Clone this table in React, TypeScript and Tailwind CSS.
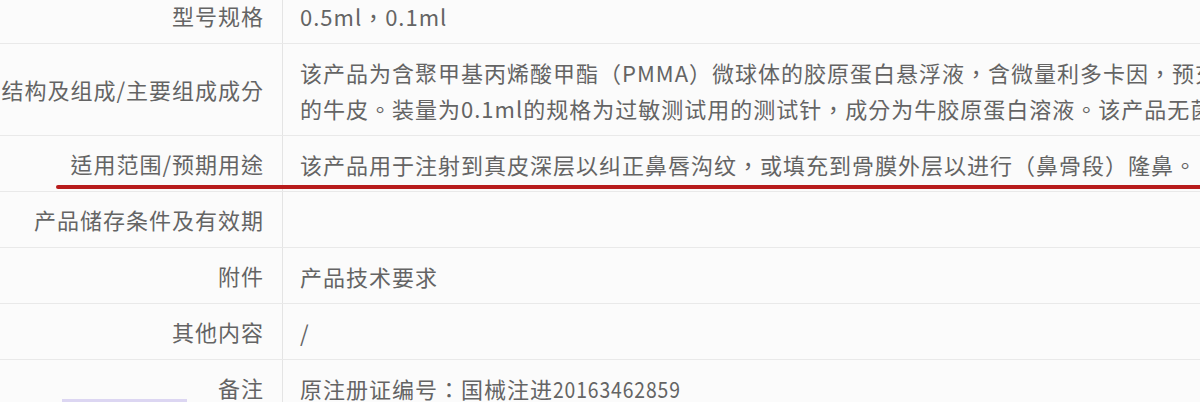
import React from "react";

interface Row {
  label: string;
  lines: React.ReactNode[];
  tall?: boolean;
}

const rows: Row[] = [
  { label: "型号规格", lines: ["0.5ml，0.1ml"] },
  {
    label: "结构及组成/主要组成成分",
    lines: [
      "该产品为含聚甲基丙烯酸甲酯（PMMA）微球体的胶原蛋白悬浮液，含微量利多卡因，预充于注射器中。",
      "的牛皮。装量为0.1ml的规格为过敏测试用的测试针，成分为牛胶原蛋白溶液。该产品无菌、无热原。",
    ],
    tall: true,
  },
  {
    label: "适用范围/预期用途",
    lines: ["该产品用于注射到真皮深层以纠正鼻唇沟纹，或填充到骨膜外层以进行（鼻骨段）隆鼻。"],
  },
  { label: "产品储存条件及有效期", lines: [""] },
  { label: "附件", lines: ["产品技术要求"] },
  { label: "其他内容", lines: ["/"] },
  {
    label: "备注",
    lines: [
      <>
        原注册证编号：国械注进
        <span className="inline-block origin-left scale-x-[0.88]">20163462859</span>
      </>,
    ],
  },
];

const TableRow = ({ row }: { row: Row }) => (
  <div
    className={`grid grid-cols-[283px_1fr] border-b border-[#e9e9e9] ${
      row.tall ? "h-[92px]" : "h-[56px]"
    }`}
  >
    <div className="flex items-center justify-end pr-[18px] border-r border-[#e4e4e4] whitespace-nowrap">
      {row.label}
    </div>
    <div className="flex flex-col justify-center pl-[17px] overflow-hidden whitespace-nowrap leading-[36px]">
      {row.lines.map((line, i) => (
        <div key={i}>{line}</div>
      ))}
    </div>
  </div>
);

export default function App() {
  return (
    <div
      className="relative w-[1200px] h-[402px] overflow-hidden bg-[#fbfbfb] text-[22px] tracking-[1px] text-[#646464]"
      style={{ fontFamily: '"Noto Sans CJK TC", "Noto Sans CJK SC", sans-serif' }}
    >
      <div className="-mt-[12px]">
        {rows.map((row) => (
          <TableRow key={row.label} row={row} />
        ))}
      </div>
      {/* red annotation underline */}
      <div className="absolute left-[56px] top-[185px] w-[1160px] h-[4px] rounded-full bg-[#b81c1c]" />
      <div className="absolute left-[62px] top-[399px] w-[125px] h-[3px] bg-[#dcd6f2]" />
    </div>
  );
}
